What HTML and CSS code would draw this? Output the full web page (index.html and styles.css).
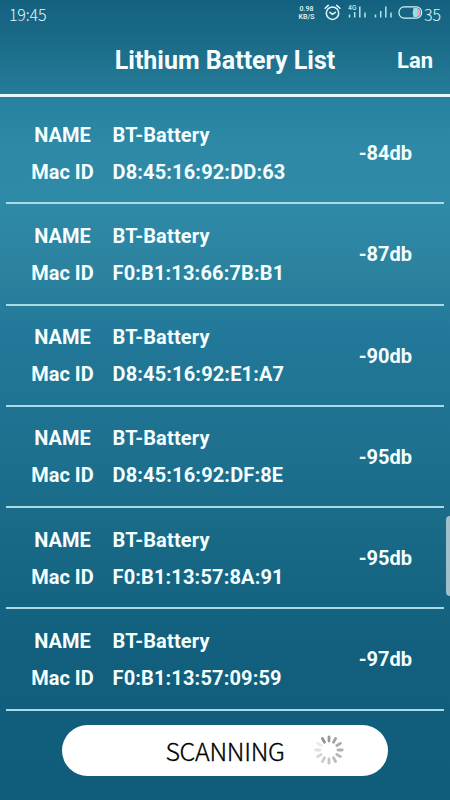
FILE: index.html
```html
<!DOCTYPE html>
<html lang="en">
<head>
    <meta charset="UTF-8">
    <title>Lithium Battery List</title>
    <link rel="stylesheet" href="styles.css">
</head>
<body>
    <div class="status-bar">
        <span class="clock">19:45</span>
        <div class="status-icons">
            <div class="speed"><span>0.98</span><span>KB/S</span></div>
            <svg class="alarm" width="17" height="17" viewBox="0 0 17 17" fill="none" stroke="#e4f8fb" stroke-width="1.5" stroke-linecap="round">
                <circle cx="8.5" cy="9.2" r="6.2"/>
                <path d="M1.1 4.3 4.3 1.4M15.9 4.3 12.7 1.4M5.9 8.3 8.5 10.3 11.4 8.3"/>
            </svg>
            <div class="network">
                <span class="network-type">4G</span>
                <svg width="19" height="13" viewBox="0 0 19 13" stroke="#b4e3ea" stroke-width="1.5">
                    <path d="M1.5 9.5V12.5M6.7 7V12.5M11.8 1.5V12.5M17 7.5V12.5"/>
                </svg>
            </div>
            <svg class="signal" width="19" height="13" viewBox="0 0 19 13" stroke="#b4e3ea" stroke-width="1.5">
                <path d="M1.5 9.5V12.5M6.7 6V12.5M11.8 1.5V12.5M17 7.5V12.5"/>
            </svg>
            <svg class="battery" width="25" height="13" viewBox="0 0 25 13">
                <path d="M15.5 2H18.5Q22 2.5 22 6.5T18.5 11H15.5Q14 6.5 15.5 2Z" fill="#9bdde8"/>
                <path d="M19 2Q22.5 3 22.5 6.5T19 11Z" fill="#f0a5ad"/>
                <rect x="1" y=".9" width="22.6" height="11.2" rx="5.2" fill="none" stroke="#d9f3f7" stroke-width="1.2"/>
            </svg>
            <span class="percent">35</span>
        </div>
    </div>

    <header>
        <h1>Lithium Battery List</h1>
        <a href="#" class="lang-btn">Lan</a>
    </header>

    <div class="battery-list" id="batteryList"></div>

    <button class="scan-btn">
        <span class="scan-text">SCANNING</span>
        <svg class="spinner" width="30" height="30" viewBox="-15 -15 30 30" id="spinner"></svg>
    </button>

    <div class="edge-handle"></div>

    <script>
        const batteries = [
            { name: 'BT-Battery', mac: 'D8:45:16:92:DD:63', signal: -84 },
            { name: 'BT-Battery', mac: 'F0:B1:13:66:7B:B1', signal: -87 },
            { name: 'BT-Battery', mac: 'D8:45:16:92:E1:A7', signal: -90 },
            { name: 'BT-Battery', mac: 'D8:45:16:92:DF:8E', signal: -95 },
            { name: 'BT-Battery', mac: 'F0:B1:13:57:8A:91', signal: -95 },
            { name: 'BT-Battery', mac: 'F0:B1:13:57:09:59', signal: -97 }
        ];

        document.getElementById('batteryList').innerHTML = batteries.map(item => `
            <div class="battery-item">
                <div class="labels"><span>NAME</span><span>Mac ID</span></div>
                <div class="values"><span>${item.name}</span><span>${item.mac}</span></div>
                <div class="level">${item.signal}db</div>
            </div>
        `).join('');

        // Spinner spokes, clockwise from the top
        const shades = ['#999', '#a3a3a3', '#aaa', '#b0b0b0', '#b6b6b6', '#bcbcbc', '#c4c4c4', '#ccc', '#d6d6d6', '#e0e0e0', '#eaeaea', '#929292'];
        document.getElementById('spinner').innerHTML = shades.map((shade, i) =>
            `<path d="M0-9V-13.2" stroke="${shade}" stroke-width="2.8" stroke-linecap="round" transform="rotate(${i * 30})"/>`
        ).join('');
    </script>
</body>
</html>
```

FILE: styles.css
```css
* {
    box-sizing: border-box;
}
body {
    display: flex;
    flex-direction: column;
    height: 800px;
    margin: 0;
    overflow: hidden;
    font-family: Roboto, sans-serif;
    color: #f4feff;
    background: linear-gradient(#13617f 0, #1b6c89 45px, #257c98 92px, #2782a0 100px, #2e89a7 145px, #2f8aa7 205px, #2a819e 280px, #227899 335px, #207493 400px, #196b88 520px, #12607e 640px, #0f5d7a 800px);
}
.status-bar {
    display: flex;
    justify-content: space-between;
    height: 30px;
    padding: 0 8px 0 9px;
    font-family: "Noto Sans CJK SC", sans-serif;
    color: #e4f8fb;
}
.clock {
    font-size: 16px;
    font-weight: 300;
    letter-spacing: -0.2px;
    line-height: 28px;
}
.status-icons {
    display: flex;
    align-items: flex-start;
}
.speed {
    display: flex;
    flex-direction: column;
    align-items: center;
    gap: 1px;
    width: 19px;
    margin: 6px 8px 0 0;
    font: 500 7px/7px Roboto, sans-serif;
}
.alarm {
    margin: 4px 7px 0 0;
}
.network {
    position: relative;
    margin: 5px 7px 0 0;
}
.network svg, .signal, .battery {
    display: block;
}
.network-type {
    position: absolute;
    left: 0;
    top: 0;
    font: 500 6px/6px Inter, sans-serif;
}
.signal {
    margin: 5px 5px 0 0;
}
.battery {
    margin: 6px 1px 0 0;
}
.percent {
    width: 18px;
    font-size: 16px;
    font-weight: 300;
    line-height: 29px;
}
header {
    display: grid;
    grid-template-columns: 1fr auto 1fr;
    align-items: center;
    height: 67px;
    padding: 0 17px 3px;
    border-bottom: 3px solid #e6f8fb;
}
h1 {
    grid-column: 2;
    margin: 0;
    font-size: 25px;
    font-weight: 700;
}
.lang-btn {
    justify-self: end;
    color: inherit;
    font-size: 22px;
    font-weight: 700;
    text-decoration: none;
}
.battery-list {
    padding: 6px 6px 0;
}
.battery-item {
    display: grid;
    grid-template-columns: 106.5px 1fr auto;
    align-items: center;
    height: 101.25px;
    padding: 1px 32px 0 0;
    border-bottom: 2px solid #a9dbe5;
    font-size: 20px;
    font-weight: 700;
}
.labels, .values {
    display: flex;
    flex-direction: column;
    gap: 13px;
    line-height: 24px;
}
.labels {
    align-items: center;
    width: 113px;
}
.values {
    letter-spacing: 0.15px;
}
.scan-btn {
    display: grid;
    grid-template-columns: 1fr auto 1fr;
    align-items: center;
    width: 326px;
    height: 51px;
    margin: 14px auto 0;
    padding: 0;
    border: none;
    border-radius: 26px;
    background-color: #fff;
    color: #000;
}
.scan-text {
    grid-column: 2;
    font: 300 25px/50px "Noto Sans CJK SC", sans-serif;
    letter-spacing: -0.3px;
    -webkit-text-stroke: 0.3px #000;
}
.spinner {
    margin-left: 29px;
}
.edge-handle {
    position: absolute;
    right: 0;
    top: 516px;
    width: 4px;
    height: 80px;
    border-radius: 4px 0 0 4px;
    background-color: #a0bfcb;
}
```
